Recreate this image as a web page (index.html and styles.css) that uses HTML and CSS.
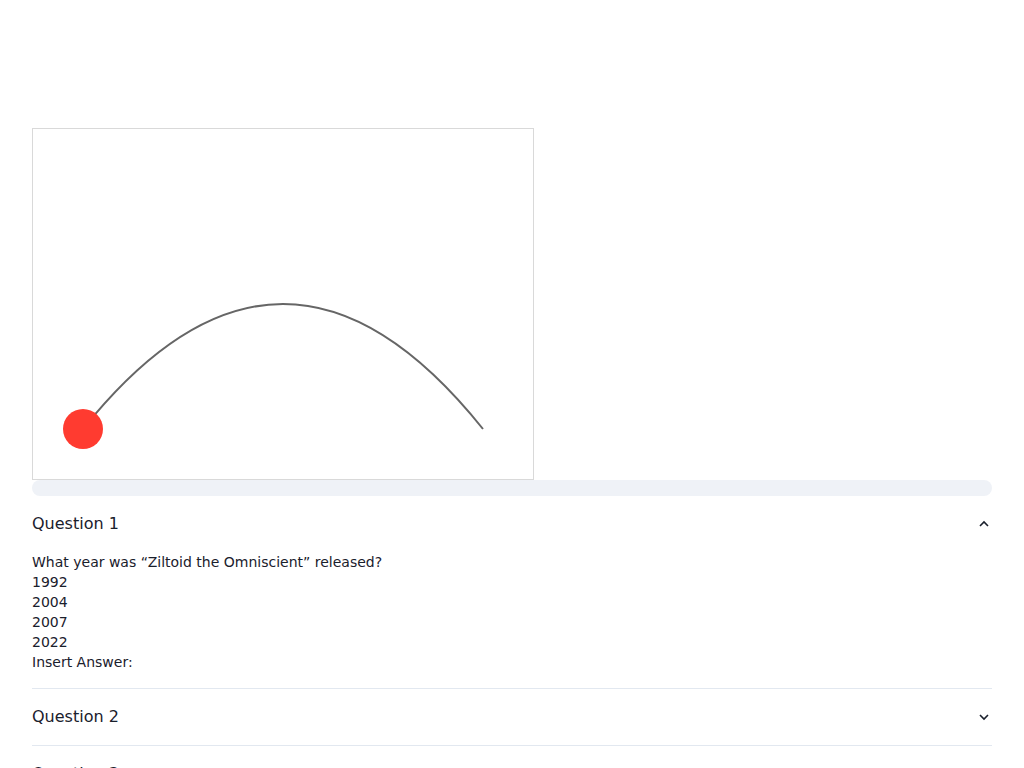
FILE: index.html
```html
<!DOCTYPE html>
<html lang="en">
<head>
<meta charset="utf-8">
<title>Quiz</title>
<link rel="stylesheet" href="styles.css">
</head>
<body>
<main class="page">
  <div class="stage">
    <svg class="canvas" width="500" height="350" viewBox="0 0 500 350">
      <path d="M50 300 Q250 50 450 300" fill="none" stroke="#666" stroke-width="2"/>
      <circle cx="50" cy="300" r="20" fill="#ff3b30"/>
    </svg>
  </div>
  <div class="progress"></div>
  <section class="accordion">
    <div class="item">
      <button class="head">
        <span>Question 1</span>
        <svg class="chev" width="12" height="12" viewBox="0 0 12 12"><path d="M2 8 L6 4 L10 8" fill="none" stroke="#1a202c" stroke-width="1.6"/></svg>
      </button>
      <div class="panel">
        <p>What year was “Ziltoid the Omniscient” released?</p>
        <p>1992</p>
        <p>2004</p>
        <p>2007</p>
        <p>2022</p>
        <p>Insert Answer:</p>
      </div>
    </div>
    <div class="item">
      <button class="head">
        <span>Question 2</span>
        <svg class="chev" width="12" height="12" viewBox="0 0 12 12"><path d="M2 4 L6 8 L10 4" fill="none" stroke="#1a202c" stroke-width="1.6"/></svg>
      </button>
    </div>
    <div class="item">
      <button class="head">
        <span>Question 3</span>
        <svg class="chev" width="12" height="12" viewBox="0 0 12 12"><path d="M2 4 L6 8 L10 4" fill="none" stroke="#1a202c" stroke-width="1.6"/></svg>
      </button>
    </div>
  </section>
</main>
</body>
</html>
```
FILE: styles.css
```css
* { box-sizing: border-box; }
html, body { margin: 0; padding: 0; background: #fff; }
body {
  font-family: "DejaVu Sans", sans-serif;
  color: #1a202c;
}
.page {
  padding: 128px 32px 0;
}
.stage {
  display: flex;
}
.canvas {
  display: block;
  border: 1px solid #d9d9d9;
  width: 502px;
  height: 352px;
  background: #fff;
}
.progress {
  height: 16px;
  border-radius: 8px;
  background: #eff2f7;
}
.accordion { display: flex; flex-direction: column; }
.item { border-bottom: 1px solid #e2e8f0; }
.head {
  display: flex;
  align-items: center;
  justify-content: space-between;
  width: 100%;
  padding: 16px 0;
  border: 0;
  background: none;
  font: inherit;
  font-size: 16px;
  line-height: 24px;
  color: #1a202c;
  text-align: left;
}
.chev { margin-right: 2px; }
.panel {
  padding: 0 0 16px;
  font-size: 14px;
  line-height: 20px;
}
.panel p { margin: 0; }
```
